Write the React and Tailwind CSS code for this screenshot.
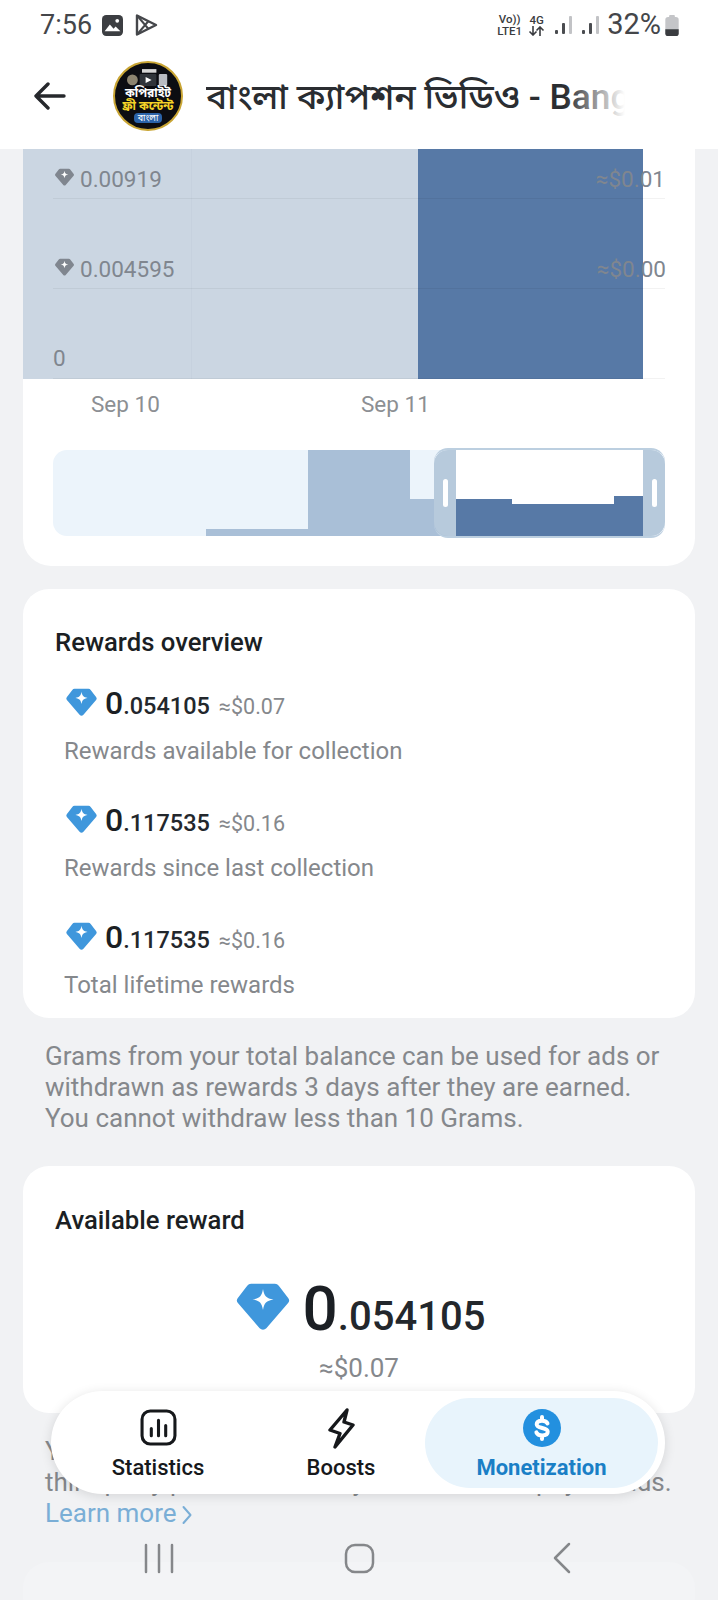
const DIAMOND = 'M7 2h10a2 2 0 0 1 1.6.8l4 5.2a1.6 1.6 0 0 1-.1 2L13.4 20.6a1.9 1.9 0 0 1-2.8 0L1.5 10a1.6 1.6 0 0 1-.1-2l4-5.2A2 2 0 0 1 7 2z';
const SPARK = 'M12 4.2c.5 3 1.4 3.9 4.4 4.4-3 .5-3.9 1.4-4.4 4.4-.5-3-1.4-3.9-4.4-4.4 3-.5 3.9-1.4 4.4-4.4z';

function Diamond({ className, color = '#3f97dc' }) {
  return (
    <svg viewBox="0 0 24 23" className={className}>
      <path d={DIAMOND} fill={color} />
      <path d={SPARK} fill="#fff" />
    </svg>
  );
}

function Signal({ className }) {
  return (
    <svg viewBox="0 0 19 20" className={className}>
      <rect x="1" y="15" width="3" height="4" rx="1" fill="#4a4c50" />
      <rect x="8" y="8" width="3" height="11" rx="1" fill="#4a4c50" />
      <rect x="15" y="1" width="3" height="18" rx="1" fill="#c2c3c6" />
    </svg>
  );
}

function Reward({ small, usd, label }) {
  return (
    <div className="h-[117px] pl-[41px]">
      <div className="flex h-[40px] items-center">
        <Diamond className="mb-[6px] h-[32px] w-[35px]" />
        <div className="ml-[6px] flex items-baseline">
          <span className="text-[32px] leading-[40px] font-medium text-[#1b1f24]">0</span>
          <span className="text-[23.500px] leading-[40px] font-medium text-[#23272c]">.{small}</span>
          <span className="ml-[9px] text-[21.5px] leading-[40px] text-[#85888c]">≈${usd}</span>
        </div>
      </div>
      <p className="mt-[11px] text-[24px] leading-[31px] text-[#85888c]">{label}</p>
    </div>
  );
}

function Logo() {
  return (
    <div className="flex h-[70px] w-[70px] flex-col items-center overflow-hidden rounded-full border-2 border-[#c9a534] bg-[#0c0d12]">
      <svg viewBox="0 0 40 14" className="mt-[5px] h-[19px] w-[48px]">
        <circle cx="7" cy="9" r="4.5" fill="#8c8470" />
        <rect x="13" y="4" width="14" height="10" rx="1" fill="#30343a" />
        <path d="M18 6.500l5 2.500-5 2.500z" fill="#fff" />
        <rect x="15" y="0" width="12" height="3" fill="#d5d5d5" />
        <rect x="29" y="4" width="7" height="10" rx="1" fill="#b9bcc2" />
      </svg>
      <span className="text-[12px] leading-[13px] font-bold whitespace-nowrap text-white">কপিরাইট</span>
      <span className="text-[12px] leading-[13px] font-bold whitespace-nowrap text-[#f5d327]">ফ্রী কন্টেন্ট</span>
      <span className="rounded-sm bg-[#2b63a8] px-1 text-[9px] leading-[10px] text-white">বাংলা</span>
    </div>
  );
}

function NavTab({ label, active, className, children }) {
  return (
    <div className={`flex h-[90px] flex-none flex-col items-center justify-start rounded-[45px] pt-[11px] ${className} ${active ? 'bg-[#e8f4fc]' : ''}`}>
      <div className="flex h-[38px] items-center">{children}</div>
      <span className={`mt-[8px] text-[22px] leading-[26px] ${active ? 'font-bold text-[#1a7fc6]' : 'font-medium text-[#16181b]'}`}>{label}</span>
    </div>
  );
}

export default function App() {
  return (
    <div className="relative h-[1600px] w-[718px] overflow-hidden bg-[#f1f2f4] font-['Roboto','Noto_Sans_Bengali','Noto_Sans',sans-serif]">
      <header className="h-[149px] bg-white">
        <div className="flex h-[50px] items-center justify-between pl-[40px] pr-[39px]">
          <div className="flex items-center">
            <span className="text-[27px] text-[#44464a]">7:56</span>
            <svg viewBox="0 0 20 20" className="ml-[10px] h-[21px] w-[21px]">
              <rect x="0" y="0" width="20" height="20" rx="4" fill="#3c3e42" />
              <circle cx="14.500" cy="5.500" r="1.800" fill="#fff" />
              <path d="M2.500 15.500l5-6.500 3.500 4 2-2 4.500 4.500z" fill="#fff" />
            </svg>
            <svg viewBox="0 0 24 24" className="ml-[11px] h-[24px] w-[24px]" fill="none" stroke="#45474b" strokeWidth="2.400" strokeLinejoin="round">
              <path d="M3 2.500v19L22 12z" />
              <path d="M3.500 3l11 13M3.500 21l11-13" strokeWidth="2" />
            </svg>
          </div>
          <div className="flex items-center">
            <div className="flex flex-col items-center text-[11.5px] leading-[12px] font-medium text-[#3a3c40]">
              <span>Vo))</span>
              <span>LTE1</span>
            </div>
            <div className="ml-[6px] flex w-[17px] flex-col items-center text-[11.5px] leading-[12px] font-medium text-[#3a3c40]">
              <span>4G</span>
              <svg viewBox="0 0 17 10" className="h-[10px] w-[17px]" fill="none" stroke="#3a3c40" strokeWidth="1.600">
                <path d="M5 0v9M1.500 5.500L5 9l3.500-3.500M12 10V1M8.500 4.500L12 1l3.500 3.500" />
              </svg>
            </div>
            <Signal className="ml-[9px] h-[20px] w-[19px]" />
            <Signal className="ml-[8px] h-[20px] w-[19px]" />
            <span className="ml-[7px] text-[29px] text-[#44464a]">32%</span>
            <svg viewBox="0 0 14 22" className="ml-[4px] h-[21px] w-[14px]">
              <rect x="4" y="0" width="6" height="3" rx="1" fill="#c4c5c8" />
              <rect x="0" y="2" width="14" height="20" rx="3" fill="#c4c5c8" />
              <path d="M0 15h14v4a3 3 0 0 1-3 3H3a3 3 0 0 1-3-3z" fill="#3a3c40" />
            </svg>
          </div>
        </div>
        <div className="flex items-start pl-[34px]">
          <svg viewBox="0 0 32 32" className="mt-[30px] h-[32px] w-[32px]" fill="none" stroke="#26282c" strokeWidth="3.400" strokeLinecap="round" strokeLinejoin="round">
            <path d="M30 16H2M14 4L2 16l12 12" />
          </svg>
          <div className="ml-[47px] mt-[11px]"><Logo /></div>
          <div className="relative ml-[23px] mt-[25px] w-[419px] overflow-hidden">
            <p className="text-[35.3px] leading-[44px] font-medium whitespace-nowrap text-[#2a2d31]">বাংলা ক্যাপশন ভিডিও - Bangla Caption</p>
            <div className="absolute inset-y-0 right-0 w-[60px] bg-gradient-to-r from-transparent to-white" />
          </div>
        </div>
      </header>

      <main className="px-[23px]">
        <section className="rounded-b-[28px] bg-white pb-[30px]">
          <div className="relative h-[230px]">
            <svg viewBox="0 0 672 230" className="h-[230px] w-[672px]">
              <rect x="0" y="0" width="395" height="230" fill="#cbd6e2" />
              <rect x="395" y="0" width="225" height="230" fill="#5779a6" />
              <rect x="168" y="0" width="1" height="230" fill="#c6d1de" />
              <rect x="30" y="49" width="612" height="1" fill="#000" opacity=".05" />
              <rect x="30" y="139" width="612" height="1" fill="#000" opacity=".05" />
              <rect x="30" y="229" width="612" height="1" fill="#000" opacity=".05" />
            </svg>
            <div className="absolute left-[31px] top-[16px] flex items-center gap-[5px] text-[22.500px] leading-[28px] text-[#80868f]">
              <Diamond className="mb-[5px] h-[20px] w-[21px]" color="#80868f" />
              <span>0.00919</span>
            </div>
            <div className="absolute left-[31px] top-[106px] flex items-center gap-[5px] text-[22.500px] leading-[28px] text-[#80868f]">
              <Diamond className="mb-[5px] h-[20px] w-[21px]" color="#80868f" />
              <span>0.004595</span>
            </div>
            <span className="absolute left-[30px] top-[195px] text-[22.500px] leading-[28px] text-[#80868f]">0</span>
            <span className="absolute right-[30px] top-[16px] text-[22.500px] leading-[28px] text-[#80868f]">≈$0.01</span>
            <span className="absolute right-[29px] top-[106px] text-[22.500px] leading-[28px] text-[#80868f]">≈$0.00</span>
          </div>
          <div className="relative h-[50px] text-[22.500px] leading-[50px] text-[#8c8f93]">
            <span className="absolute left-[68px]">Sep 10</span>
            <span className="absolute left-[338px]">Sep 11</span>
          </div>
          <div className="relative mx-[30px] mt-[21px] h-[86px]">
            <svg viewBox="0 0 612 86" className="h-[86px] w-[612px]">
              <rect x="0" y="0" width="612" height="86" rx="14" fill="#ecf4fb" />
              <rect x="153" y="79" width="102" height="7" fill="#a9bfd7" />
              <rect x="255" y="0" width="102" height="86" fill="#a9bfd7" />
              <rect x="357" y="49" width="46" height="37" fill="#a9bfd7" />
              <rect x="403" y="0" width="187" height="86" fill="#fff" />
              <rect x="403" y="49" width="56" height="37" fill="#5779a6" />
              <rect x="459" y="54" width="102" height="32" fill="#5779a6" />
              <rect x="561" y="46" width="29" height="40" fill="#5779a6" />
            </svg>
            <div className="absolute -top-[2px] right-0 flex h-[90px] w-[231px] rounded-[14px] border-y-2 border-[#bccfe0]">
              <div className="flex w-[22px] items-center justify-center rounded-l-[14px] bg-[#b7cadc]">
                <div className="h-[28px] w-[5px] rounded-full bg-white" />
              </div>
              <div className="flex-1" />
              <div className="flex w-[22px] items-center justify-center rounded-r-[14px] bg-[#b7cadc]">
                <div className="h-[28px] w-[5px] rounded-full bg-white" />
              </div>
            </div>
          </div>
        </section>

        <section className="mt-[23px] h-[429px] rounded-[26px] bg-white pt-[37px]">
          <h2 className="pl-[32px] text-[25.700px] leading-[32px] font-medium text-[#1b1f24]">Rewards overview</h2>
          <div className="mt-[27px]">
            <Reward small="054105" usd="0.07" label="Rewards available for collection" />
            <Reward small="117535" usd="0.16" label="Rewards since last collection" />
            <Reward small="117535" usd="0.16" label="Total lifetime rewards" />
          </div>
        </section>

        <p className="mt-[23px] px-[22px] text-[26px] leading-[31px] text-[#85888c]">
          Grams from your total balance can be used for ads or withdrawn as rewards 3 days after they are earned. You cannot withdraw less than 10 Grams.
        </p>

        <section className="mt-[32px] h-[247px] rounded-[26px] bg-white pt-[38px] text-center">
          <h2 className="pl-[32px] text-left text-[25.700px] leading-[32px] font-medium text-[#1b1f24]">Available reward</h2>
          <div className="mt-[38px] flex items-center justify-center">
            <Diamond className="mb-[14px] h-[55px] w-[60px]" />
            <div className="ml-[10px] flex items-baseline">
              <span className="text-[62px] leading-[70px] font-medium text-[#1b1f24]">0</span>
              <span className="text-[40px] leading-[70px] font-medium text-[#23272c]">.054105</span>
            </div>
          </div>
          <p className="-mt-[1px] text-[26px] leading-[34px] text-[#85888c]">≈$0.07</p>
        </section>

        <p className="mt-[23px] px-[22px] text-[26px] leading-[31px] whitespace-nowrap text-[#85888c]">
          You can collect your reward using Fragment, a<br />third-party platform used by advertisers to pay for ads.
          <span className="flex items-center gap-[5px] text-[#7aaed6]">
            Learn more
            <svg viewBox="0 0 10 20" className="mt-[2px] h-[20px] w-[10px]" fill="none" stroke="#7aaed6" strokeWidth="2" strokeLinecap="round" strokeLinejoin="round">
              <path d="M1.500 2l7 8-7 8" />
            </svg>
          </span>
        </p>
      </main>

      <div className="absolute top-[1562px] left-[23px] h-[60px] w-[672px] rounded-[26px] bg-[#f3f4f6]" />

      <nav className="absolute top-[1391px] left-[51px] flex h-[103px] w-[614px] items-center rounded-[52px] bg-white shadow-[0_2px_12px_rgba(0,0,0,0.12)]">
        <NavTab label="Statistics" className="w-[214px]">
          <svg viewBox="0 0 36 36" className="h-[37px] w-[37px]" fill="none" stroke="#16181b" strokeLinecap="round">
            <rect x="2" y="2" width="32" height="32" rx="8" strokeWidth="3" />
            <path d="M11 19v7M18 11v15M25 16v10" strokeWidth="3" />
          </svg>
        </NavTab>
        <NavTab label="Boosts" className="w-[152px]">
          <svg viewBox="0 0 28 42" className="h-[42px] w-[28px]" fill="none" stroke="#16181b" strokeWidth="3.400" strokeLinejoin="round">
            <path d="M20 3L3 23l10 3.500L8 40l18-22-9-3z" />
          </svg>
        </NavTab>
        <NavTab label="Monetization" active className="ml-[8px] w-[233px]">
          <svg viewBox="0 0 38 38" className="h-[38px] w-[38px]">
            <circle cx="19" cy="19" r="19" fill="#2390df" />
            <path d="M24.500 14.500c-.7-1.800-2.700-2.800-5.500-2.800-3.200 0-5.300 1.400-5.300 3.600 0 4.900 11 2.600 11 7.500 0 2.300-2.300 3.600-5.500 3.600-2.800 0-5-1-5.800-3M19 8v3.500M19 26.500V30" fill="none" stroke="#fff" strokeWidth="4" strokeLinecap="round" />
          </svg>
        </NavTab>
      </nav>

      <div className="absolute top-[1540px] left-0 flex h-[40px] w-full items-center">
        <svg viewBox="0 0 718 40" className="h-[40px] w-[718px]" fill="none" stroke="#85878a" strokeWidth="2.500" strokeLinecap="round" strokeLinejoin="round">
          <path d="M146 5v27M159 5v27M172 5v27" />
          <rect x="346" y="5" width="27" height="27" rx="9" />
          <path d="M569 4l-14 14 14 14" />
        </svg>
      </div>
    </div>
  );
}
